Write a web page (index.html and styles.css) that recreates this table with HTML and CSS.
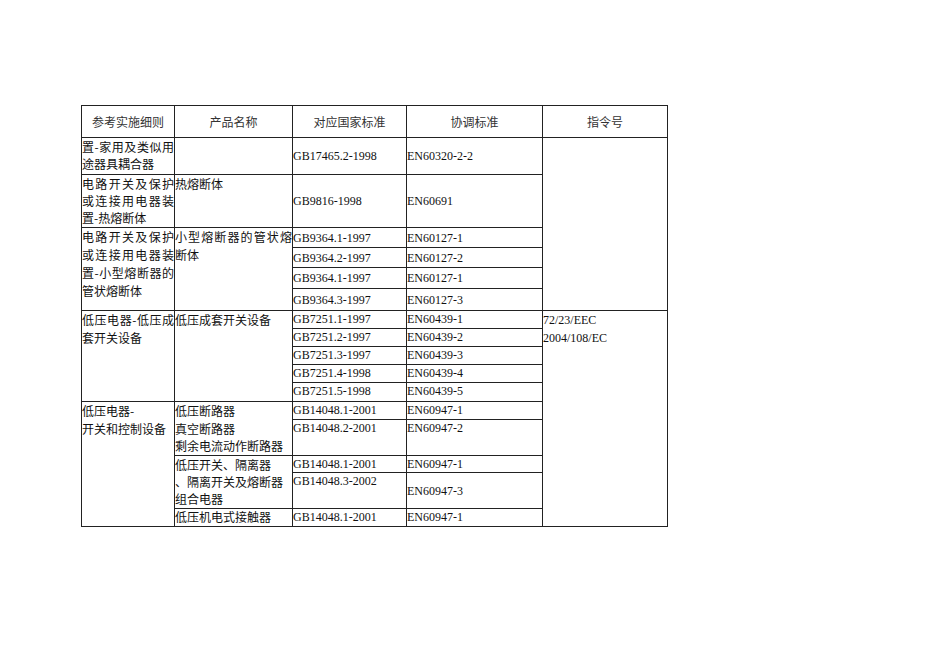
FILE: index.html
```html
<!DOCTYPE html>
<html lang="zh-CN">
<head>
<meta charset="utf-8">
<title>参考实施细则</title>
<link rel="stylesheet" href="styles.css">
</head>
<body>
<div class="page">
<table class="std">
<colgroup>
<col class="c1"><col class="c2"><col class="c3"><col class="c4"><col class="c5">
</colgroup>
<tr class="h-head">
<th>参考实施细则</th><th>产品名称</th><th>对应国家标准</th><th>协调标准</th><th>指令号</th>
</tr>
<tr class="h-a">
<td class="zh just tight">置-家用及类似用途器具耦合器</td>
<td></td>
<td class="mid">GB17465.2-1998</td>
<td class="mid">EN60320-2-2</td>
<td rowspan="6"></td>
</tr>
<tr class="h-b">
<td class="zh just tight">电路开关及保护或连接用电器装置-热熔断体</td>
<td class="zh">热熔断体</td>
<td class="mid">GB9816-1998</td>
<td class="mid">EN60691</td>
</tr>
<tr class="h-c1">
<td rowspan="4" class="zh just">电路开关及保护或连接用电器装置-小型熔断器的管状熔断体</td>
<td rowspan="4" class="zh just">小型熔断器的管状熔断体</td>
<td class="mid">GB9364.1-1997</td>
<td class="mid">EN60127-1</td>
</tr>
<tr class="h-c2"><td class="mid">GB9364.2-1997</td><td class="mid">EN60127-2</td></tr>
<tr class="h-c3"><td class="mid">GB9364.1-1997</td><td class="mid">EN60127-1</td></tr>
<tr class="h-c4"><td class="mid">GB9364.3-1997</td><td class="mid">EN60127-3</td></tr>
<tr class="h-d">
<td rowspan="5" class="zh just">低压电器-低压成套开关设备</td>
<td rowspan="5" class="zh">低压成套开关设备</td>
<td>GB7251.1-1997</td>
<td>EN60439-1</td>
<td rowspan="10" class="dir">72/23/EEC<br>2004/108/EC</td>
</tr>
<tr class="h-d"><td>GB7251.2-1997</td><td>EN60439-2</td></tr>
<tr class="h-d"><td>GB7251.3-1997</td><td>EN60439-3</td></tr>
<tr class="h-d"><td>GB7251.4-1998</td><td>EN60439-4</td></tr>
<tr class="h-d5"><td>GB7251.5-1998</td><td>EN60439-5</td></tr>
<tr class="h-e1">
<td rowspan="5" class="zh">低压电器-<br>开关和控制设备</td>
<td rowspan="2" class="zh mid3">低压断路器<br>真空断路器<br>剩余电流动作断路器</td>
<td>GB14048.1-2001</td>
<td>EN60947-1</td>
</tr>
<tr class="h-e2"><td>GB14048.2-2001</td><td>EN60947-2</td></tr>
<tr class="h-e3">
<td rowspan="2" class="zh tight">低压开关、隔离器<br>、隔离开关及熔断器<br>组合电器</td>
<td>GB14048.1-2001</td>
<td>EN60947-1</td>
</tr>
<tr class="h-e4"><td>GB14048.3-2002</td><td class="mid">EN60947-3</td></tr>
<tr class="h-e5">
<td class="zh one">低压机电式接触器</td>
<td>GB14048.1-2001</td>
<td>EN60947-1</td>
</tr>
</table>
</div>
</body>
</html>
```
FILE: styles.css
```css
html, body {
  margin: 0;
  padding: 0;
  background: #fff;
}
.page {
  padding: 105px 0 0 81px;
}
.std {
  border-collapse: collapse;
  table-layout: fixed;
  width: 586px;
  font-family: "Liberation Serif", serif;
  font-size: 12px;
  line-height: 16px;
  color: #111;
}
.c1 { width: 93px; }
.c2 { width: 118px; }
.c3 { width: 114px; }
.c4 { width: 136px; }
.c5 { width: 125px; }
.std th, .std td {
  border: 1px solid #222;
  padding: 0;
  vertical-align: top;
  text-align: left;
  font-weight: normal;
}
.std th {
  font-family: "Noto Sans CJK SC", sans-serif;
  text-align: center;
  vertical-align: middle;
  color: #333;
}
.std td.zh {
  font-family: "Noto Sans CJK SC", sans-serif;
  line-height: 18px;
}
.std td.zh.tight { line-height: 17px; }
.std td.zh.mid3 { line-height: 17.5px; }
.std td.zh.one { line-height: 16px; }
.std td.dir { line-height: 18px; }
.std td.mid { vertical-align: middle; }
.std td.just { text-align: justify; }
.h-head { height: 32px; }
.h-a { height: 37px; }
.h-b { height: 53px; }
.h-c1 { height: 20px; }
.h-c2 { height: 20px; }
.h-c3 { height: 21px; }
.h-c4 { height: 22px; }
.h-d { height: 18px; }
.h-d5 { height: 19px; }
.h-e1 { height: 18px; }
.h-e2 { height: 36px; }
.h-e3 { height: 17px; }
.h-e4 { height: 36px; }
.h-e5 { height: 18px; }
```
